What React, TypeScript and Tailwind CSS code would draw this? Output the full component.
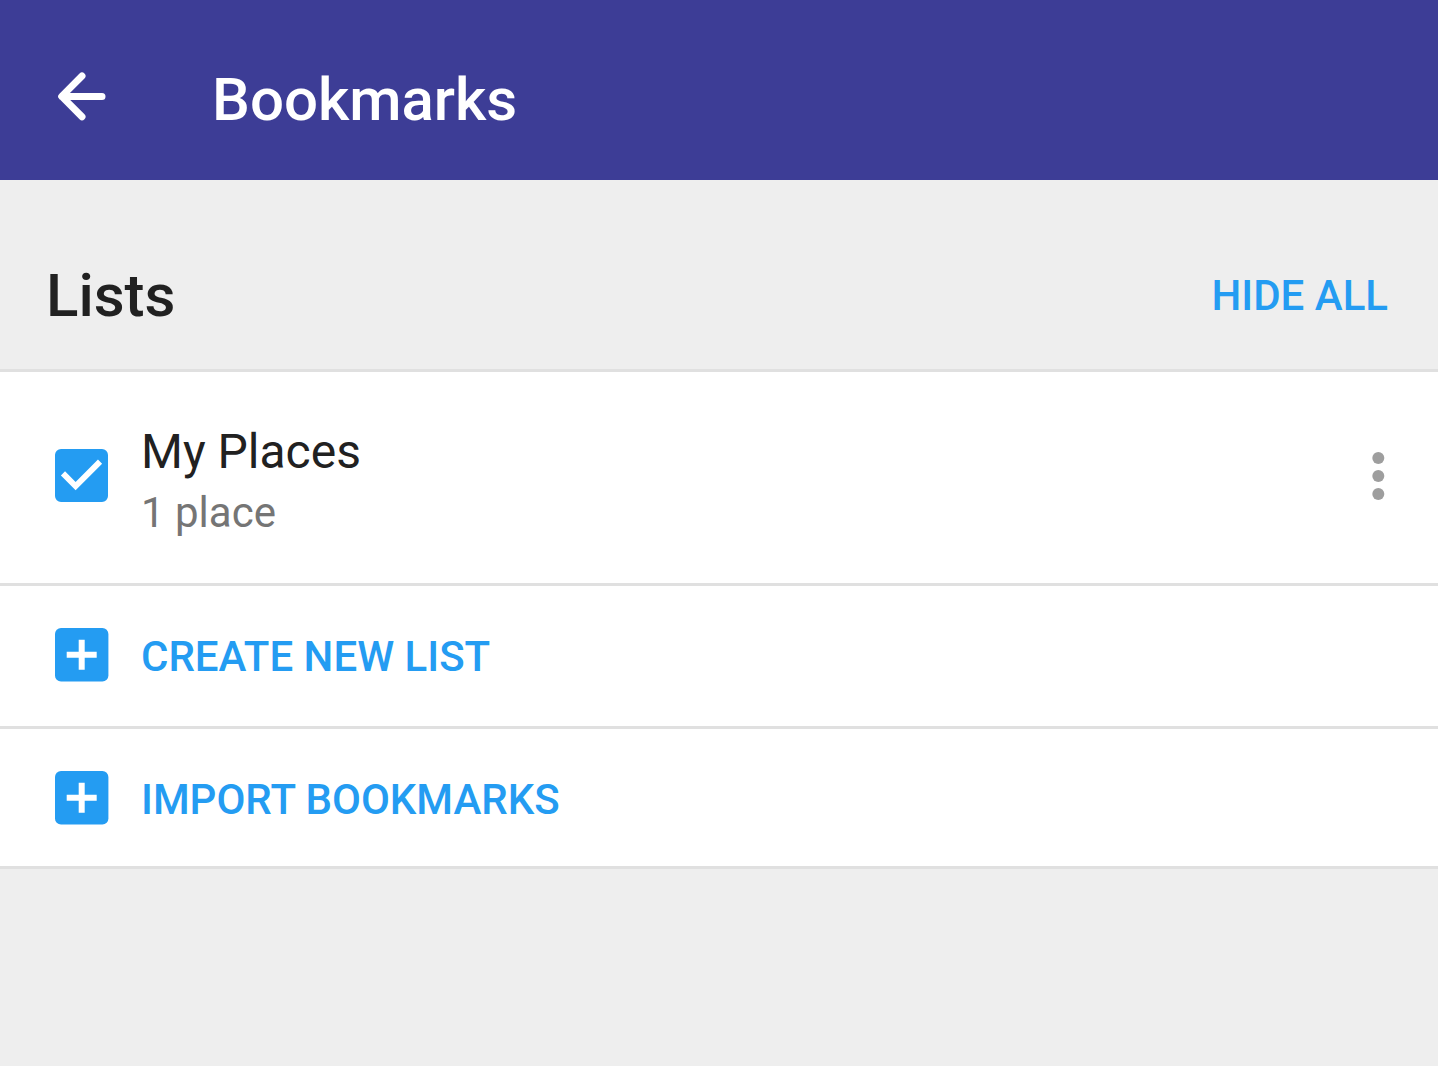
import { useState } from "react";

const actions = [
  { id: "create", label: "CREATE NEW LIST" },
  { id: "import", label: "IMPORT BOOKMARKS" },
];

function BackIcon() {
  return (
    <svg viewBox="0 0 72 72" className="h-[72px] w-[72px]" fill="none" aria-hidden="true">
      <path d="M36 12 15.7 32.4 36 52.8M16 32.4h40" stroke="#fff" strokeWidth="7" strokeLinecap="round" strokeLinejoin="round" />
    </svg>
  );
}

function PlusIcon() {
  return (
    <svg viewBox="3 3 18 18" className="h-[54px] w-[54px] shrink-0" aria-hidden="true">
      <rect x="3" y="3" width="17.8" height="17.8" rx="2" fill="#249cf2" />
      <path d="M10.9 6.9h2v4h4v2h-4v4h-2v-4h-4v-2h4z" fill="#fff" />
    </svg>
  );
}

function MoreIcon() {
  return (
    <svg viewBox="0 0 24 24" className="h-[72px] w-[72px]" fill="#9e9e9e" aria-hidden="true">
      <circle cx="12.1" cy="6" r="2" />
      <circle cx="12.1" cy="12" r="2" />
      <circle cx="12.1" cy="18" r="2" />
    </svg>
  );
}

export default function App() {
  const [visible, setVisible] = useState(true);

  return (
    <div className="min-h-screen bg-[#eeeeee] font-['Roboto',sans-serif] text-[#212121]">
      <header className="flex h-[180px] items-center bg-[#3d3d96] pt-5 pl-[46px] text-white">
        <button type="button" aria-label="Back">
          <BackIcon />
        </button>
        <h1 className="ml-[94px] text-[60px] leading-[72px] font-medium">Bookmarks</h1>
      </header>

      <main>
        <div className="flex items-center justify-between border-b-3 border-[#e0e0e0] pt-20 pr-[50px] pb-[37px] pl-[46px]">
          <h2 className="text-[60px] leading-[72px] font-medium">Lists</h2>
          <button type="button" className="text-[42px] leading-[60px] font-medium text-[#249cf2]" onClick={() => setVisible(!visible)}>
            {visible ? "HIDE ALL" : "SHOW ALL"}
          </button>
        </div>

        <div className="bg-white">
          <div className="flex h-[214px] items-center border-b-3 border-[#e0e0e0] pr-6 pb-1 pl-[55px]">
            <div className="relative h-[54px] w-[54px] shrink-0">
              <input
                id="my-places"
                type="checkbox"
                checked={visible}
                onChange={(e) => setVisible(e.target.checked)}
                className="peer block h-[53px] w-[53px] appearance-none rounded-md border-6 border-[#757575] checked:border-[#249cf2] checked:bg-[#249cf2]"
              />
              <svg viewBox="3 3 18 18" className="pointer-events-none absolute inset-0 hidden h-[53px] w-[53px] peer-checked:block" aria-hidden="true">
                <path d="M10 17l-5-5 1.41-1.41L10 14.17l7.59-7.59L19 8z" fill="#fff" />
              </svg>
            </div>
            <label htmlFor="my-places" className="ml-8 flex-1 pt-3">
              <span className="block text-[48px] leading-[62px]">My Places</span>
              <span className="block text-[42px] leading-[60px] text-[#757575]">1 place</span>
            </label>
            <button type="button" aria-label="More options">
              <MoreIcon />
            </button>
          </div>

          {actions.map((item) => (
            <button
              key={item.id}
              type="button"
              className="flex w-full items-center border-b-3 border-[#e0e0e0] pt-[39px] pb-[41px] pl-[55px] text-left last:pb-[38px]"
            >
              <PlusIcon />
              <span className="ml-8 pt-1 text-[42px] leading-[56px] font-medium text-[#249cf2]">{item.label}</span>
            </button>
          ))}
        </div>
      </main>
    </div>
  );
}
